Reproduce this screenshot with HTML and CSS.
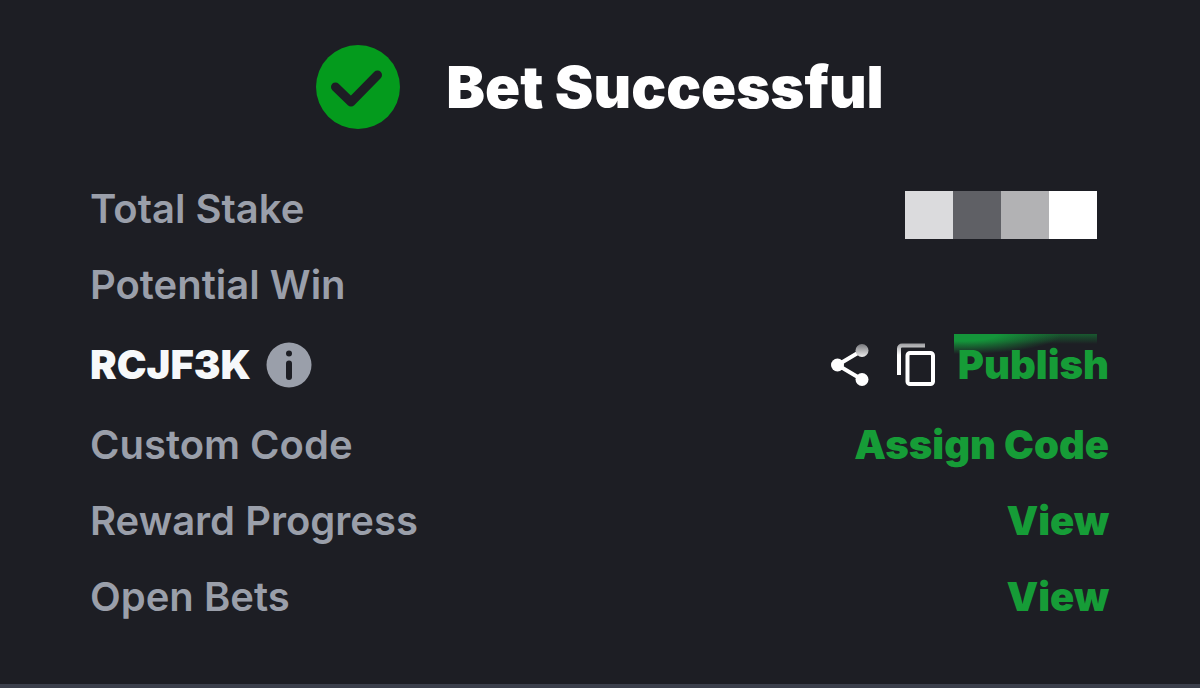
FILE: index.html
```html
<!DOCTYPE html>
<html lang="en">
<head>
<meta charset="utf-8">
<meta name="viewport" content="width=device-width, initial-scale=1">
<title>Bet Successful</title>
<link rel="stylesheet" href="styles.css">
</head>
<body>
<main class="receipt">
  <header class="header">
    <svg class="check" viewBox="0 0 84 84" aria-hidden="true">
      <circle cx="42" cy="42" r="42" fill="#049b1d"/>
      <path d="M19.500 42 35 57 61.500 30" fill="none" stroke="#1d1e24" stroke-width="9" stroke-linecap="round" stroke-linejoin="round"/>
    </svg>
    <h1 class="title">Bet Successful</h1>
  </header>
  <section class="rows">
    <div class="row">
      <span class="label">Total Stake</span>
      <span class="mosaic" role="img" aria-label="Hidden amount">
        <i class="tile tile-light"></i><i class="tile tile-dark"></i><i class="tile tile-mid"></i><i class="tile tile-white"></i>
      </span>
    </div>
    <div class="row">
      <span class="label">Potential Win</span>
    </div>
    <div class="row row-code">
      <div class="code-group">
        <strong class="code">RCJF3K</strong>
        <button class="icon-button" type="button" aria-label="About this code">
          <svg class="info" viewBox="0 0 46 46" aria-hidden="true">
            <circle cx="23" cy="23" r="22.500" fill="#9a9faa"/>
            <circle cx="23" cy="11.500" r="3" fill="#1d1e24"/>
            <path d="M23 21.500v13.500" stroke="#1d1e24" stroke-width="6" stroke-linecap="round"/>
          </svg>
        </button>
      </div>
      <div class="actions">
        <button class="icon-button" type="button" aria-label="Share">
          <svg class="share" viewBox="0 0 38 44" aria-hidden="true">
            <defs>
              <linearGradient id="fade" gradientUnits="userSpaceOnUse" x1="0" y1="1" x2="0" y2="16">
                <stop offset="0" stop-color="#77787c"/>
                <stop offset="1" stop-color="#fff"/>
              </linearGradient>
            </defs>
            <path d="M31 7.500 6.500 22 31 36.500" fill="none" stroke="#fff" stroke-width="4"/>
            <circle cx="31" cy="7.500" r="6.500" fill="url(#fade)"/>
            <circle cx="6.500" cy="22" r="6.500" fill="#fff"/>
            <circle cx="31" cy="36.500" r="6.500" fill="#fff"/>
          </svg>
        </button>
        <button class="icon-button" type="button" aria-label="Copy">
          <svg class="copy" viewBox="0 0 38 44" aria-hidden="true">
            <defs>
              <linearGradient id="fade-copy" gradientUnits="userSpaceOnUse" x1="0" y1="0" x2="0" y2="12">
                <stop offset="0" stop-color="#97989b"/>
                <stop offset="1" stop-color="#fff"/>
              </linearGradient>
            </defs>
            <path d="M28 2.500H5a3 3 0 0 0-3 3V32" fill="none" stroke="url(#fade-copy)" stroke-width="4"/>
            <rect x="10.500" y="10" width="25.500" height="31" rx="2.500" fill="none" stroke="#fff" stroke-width="4"/>
          </svg>
        </button>
        <button class="link publish" type="button">Publish</button>
      </div>
    </div>
    <div class="row">
      <span class="label">Custom Code</span>
      <button class="link" type="button">Assign Code</button>
    </div>
    <div class="row">
      <span class="label" id="reward">Reward Progress</span>
      <button class="link" type="button" aria-describedby="reward">View</button>
    </div>
    <div class="row">
      <span class="label" id="open">Open Bets</span>
      <button class="link" type="button" aria-describedby="open">View</button>
    </div>
  </section>
</main>
</body>
</html>
```
FILE: styles.css
```css
* {
  box-sizing: border-box;
}

body {
  margin: 0;
  background: #1d1e24;
  color: #fff;
  font-family: Inter, "Liberation Sans", sans-serif;
}

.receipt {
  display: flex;
  flex-direction: column;
  min-height: 100vh;
  padding-top: 45px;
  border-bottom: 4px solid #3b3f4b;
}

.header {
  display: flex;
  align-items: center;
  justify-content: center;
  gap: 46px;
}

.check {
  width: 84px;
  height: 84px;
}

.title {
  margin: 0;
  font-size: 58px;
  font-weight: 900;
  line-height: 84px;
}

.rows {
  padding: 42px 91px 48px 90px;
}

.row {
  display: flex;
  align-items: center;
  justify-content: space-between;
  height: 76px;
}

.row-code {
  height: 84px;
}

.label,
.code,
.link {
  font-size: 40px;
  line-height: 48px;
}

.label {
  color: #9a9faa;
  font-weight: 600;
}

.code {
  color: #f6f8fa;
  font-weight: 900;
}

.code-group,
.actions {
  display: flex;
  align-items: center;
}

.code-group {
  gap: 15px;
}

.actions {
  gap: 28px;
}

.icon-button,
.link {
  padding: 0;
  border: 0;
  background: none;
  font-family: inherit;
  cursor: pointer;
}

.icon-button svg {
  display: block;
}

.info {
  width: 46px;
  height: 46px;
}

.share,
.copy {
  width: 38px;
  height: 44px;
}

.link {
  color: #169c37;
  font-weight: 900;
}

.publish {
  position: relative;
  z-index: 0;
  margin-left: -5px;
}

.publish::before {
  content: "";
  position: absolute;
  z-index: -1;
  top: -7px;
  left: -4px;
  right: 12px;
  height: 20px;
  background:
    radial-gradient(ellipse 100px 20px at 8px 0, #14953a 35%, #14953a00),
    linear-gradient(#18592f, #1d1e24 50%);
}

.mosaic {
  display: flex;
  margin: 12px 12px 0 0;
}

.tile {
  width: 48px;
  height: 48px;
}

.tile-light {
  background: #dbdbdd;
}

.tile-dark {
  background: #5f6065;
}

.tile-mid {
  background: #b2b2b4;
}

.tile-white {
  background: #fff;
}
```
